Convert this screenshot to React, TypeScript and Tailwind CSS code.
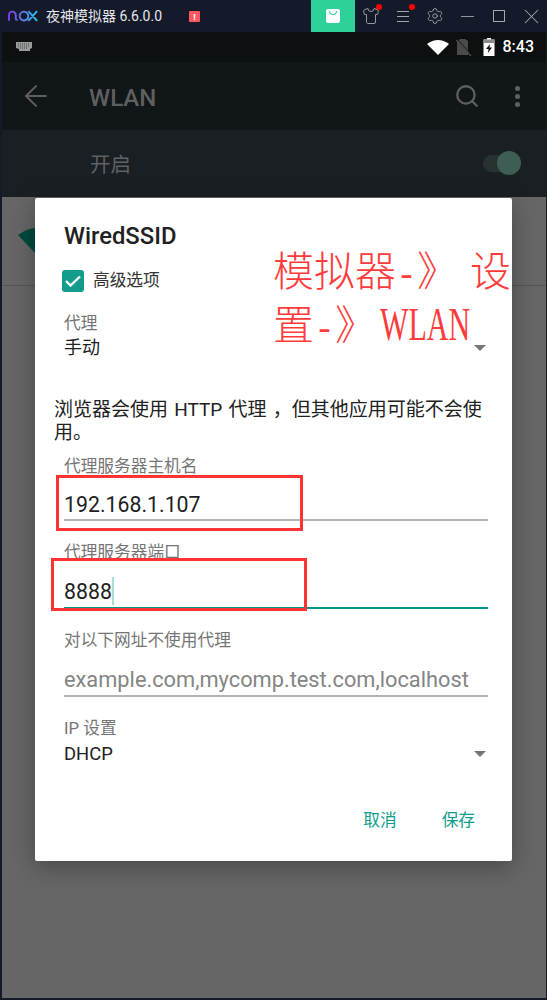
import { ArrowLeft, Search, Minus, X, Settings, Shirt } from 'lucide-react';

const sans = 'font-["Roboto","Noto_Sans_CJK_SC",sans-serif]';

function Caret() {
  return <div className="w-0 h-0 border-x-[6px] border-x-transparent border-t-[6px] border-t-[#757575]" />;
}

function TitleBar() {
  return (
    <div className="h-8 bg-[#141a29] flex items-center text-[#e4e7ee]">
      <svg width="31" height="12" viewBox="0 0 32 12" fill="none" strokeWidth="2" className="ml-2">
        <defs>
          <linearGradient id="nox" x1="0" y1="0" x2="1" y2="0">
            <stop offset="0" stopColor="#7c3fe0" />
            <stop offset="0.55" stopColor="#5b7fe6" />
            <stop offset="1" stopColor="#22c4f2" />
          </linearGradient>
        </defs>
        <path d="M1 11V5a3.5 3.5 0 0 1 7 0v4a2 2 0 0 0 2 1M12 6a4.5 4.5 0 1 1 0 .1M21 1l9 10M30 1l-9 10" stroke="url(#nox)" />
      </svg>
      <span className={`ml-[7px] mt-px text-[14px] ${sans}`}>夜神模拟器 6.6.0.0</span>
      <span className="ml-[27px] w-[11px] h-[11px] bg-[#ff5660] rounded-[1px] flex items-center justify-center text-[9px] font-bold text-white leading-none">!</span>
      <div className="ml-auto flex items-center h-full text-[#a2a6af]">
        <div className="w-11 h-full bg-[#2ed197] flex items-center justify-center">
          <div className="w-[14px] h-[14px] bg-white rounded-[2px] flex justify-center">
            <div className="w-2 h-1 border-b border-x border-[#2ed197] rounded-b-full mt-[2px]" />
          </div>
        </div>
        <div className="relative w-8 h-full flex items-center justify-center">
          <Shirt size={18} strokeWidth={1.2} />
          <span className="absolute top-1 left-[21px] w-[6px] h-[6px] rounded-full bg-[#ff0000]" />
        </div>
        <div className="relative w-8 h-full flex items-center justify-center">
          <div className="w-3 flex flex-col gap-[4px]">
            <div className="h-px bg-[#a2a6af]" />
            <div className="h-px bg-[#a2a6af]" />
            <div className="h-px bg-[#a2a6af]" />
          </div>
          <span className="absolute top-1 left-[22px] w-[6px] h-[6px] rounded-full bg-[#ff0000]" />
        </div>
        <div className="w-8 flex justify-center">
          <Settings size={18} strokeWidth={1.2} />
        </div>
        <div className="w-8 flex justify-center">
          <Minus size={21} strokeWidth={1} />
        </div>
        <div className="w-8 flex justify-center">
          <div className="w-3 h-3 border border-[#a2a6af]" />
        </div>
        <div className="w-8 flex justify-center">
          <X size={25} strokeWidth={1} />
        </div>
      </div>
    </div>
  );
}

function StatusBar() {
  return (
    <div className="h-[30px] bg-[#0d1011] flex items-center pl-[13px] pr-[12px]">
      <svg width="18" height="10" viewBox="0 0 18 10" className="text-[#9a9a9a]">
        <path d="M1 0h16v6l-2 1v2H4V7L1 6z" fill="currentColor" />
        <path d="M3 2h12M3 4h12M5 6h8" stroke="#0d1011" strokeWidth="0.6" strokeDasharray="1 1" />
      </svg>
      <div className="ml-auto flex items-center">
        <svg width="22" height="16" viewBox="0 0 22 16">
          <path d="M0 5Q11-3 22 5L11 16z" fill="#fff" />
        </svg>
        <svg width="16" height="17" viewBox="0 0 16 17" className="ml-[7px]">
          <path d="M1 2.5V16h11V2L9 0H4z" fill="#4a4a4a" />
          <path d="M0 1l15 16" stroke="#4a4a4a" strokeWidth="1.4" />
          <path d="M1 0l15 16" stroke="#0d1011" strokeWidth="0.8" />
        </svg>
        <svg width="12" height="18" viewBox="0 0 12 18" className="ml-[11px]">
          <path d="M4 0h4v1.5h3.5V18H.5V1.5H4z" fill="#fff" />
          <path d="M.5 1.5h11V5H.5z" fill="#8a8a8a" />
          <path d="M7 6 3 11h2.5L5 15l4-5.5H6.5z" fill="#0d1011" />
        </svg>
        <span className="ml-[8px] text-[16px] font-medium text-white font-['Roboto',sans-serif]">8:43</span>
      </div>
    </div>
  );
}

function Toolbar() {
  return (
    <div className="h-[68px] bg-[#111618] flex items-center text-[#5f5f5f]">
      <ArrowLeft size={34} strokeWidth={1.4} className="ml-[17px]" />
      <span className="ml-[36px] mt-[4px] text-[24px] font-medium font-['Roboto',sans-serif]">WLAN</span>
      <div className="ml-auto mr-[26px] flex items-center">
        <Search size={26} strokeWidth={2.1} />
        <div className="ml-[35px] flex flex-col gap-[3px]">
          <div className="w-[5px] h-[5px] rounded-full bg-[#5f5f5f]" />
          <div className="w-[5px] h-[5px] rounded-full bg-[#5f5f5f]" />
          <div className="w-[5px] h-[5px] rounded-full bg-[#5f5f5f]" />
        </div>
      </div>
    </div>
  );
}

function SwitchRow() {
  return (
    <div className="h-[67px] bg-[#1a1f23] flex items-center">
      <span className={`ml-[88px] mt-[4px] text-[20.5px] text-[#5f6163] ${sans}`}>开启</span>
      <div className="relative ml-auto mr-[25px] w-[38px] h-[17px] rounded-full bg-[#26332f]">
        <div className="absolute -top-[4px] right-0 w-6 h-6 rounded-full bg-[#3d5d55]" />
      </div>
    </div>
  );
}

function Field({ label, value, muted, focused }: { label: string; value: string; muted?: boolean; focused?: boolean }) {
  return (
    <div className="ml-[29px] mr-[24px]">
      <div className="text-[16.7px] leading-5 text-[#757575]">{label}</div>
      <div className={`leading-[30px] ${muted || focused ? 'mt-[14px]' : 'mt-[13px]'} ${muted ? 'text-[21.8px] text-[#858585]' : 'text-[21.3px] text-[#212121]'}`}>
        {value}
        {focused && <span className="inline-block align-[-6px] w-[2px] h-[28px] bg-[#a9ddd7]" />}
      </div>
      <div className={`h-[2px] ${focused ? 'bg-[#009688]' : 'bg-[#b3b3b3]'} ${muted || focused ? '' : '-mt-px'}`} />
    </div>
  );
}

function Dialog() {
  return (
    <div className={`absolute left-[35px] top-[198px] w-[477px] h-[663px] bg-white rounded-[2px] shadow-[0_6px_24px_rgba(0,0,0,0.3)] ${sans}`}>
      <div className="ml-[29px] pt-[24px] text-[23.8px] leading-[28px] font-medium text-[#212121]">WiredSSID</div>
      <div className="ml-[27px] mt-[20px] flex items-center leading-[22px]">
        <div className="w-[22px] h-[22px] rounded-[3px] bg-[#139c8c] flex items-center justify-center">
          <svg width="16" height="12" viewBox="0 0 16 12" fill="none" stroke="#fff" strokeWidth="2.4">
            <path d="M1 6l4.5 4.5L15 1.5" />
          </svg>
        </div>
        <span className="ml-[9px] text-[16.7px] text-[#333]">高级选项</span>
      </div>
      <div className="ml-[29px] mt-[22px] text-[16.7px] leading-5 text-[#757575]">代理</div>
      <div className="ml-[29px] mr-[26px] mt-[4px] flex items-center justify-between text-[18px] leading-5 text-[#212121]">
        <span>手动</span>
        <Caret />
      </div>
      <p className="ml-[19px] mr-[4px] mt-[40px] text-[19px] leading-[23px] text-[#212121] [word-spacing:1.5px]">
        浏览器会使用 HTTP 代理 ，但其他应用可能不会使
        <br />
        用。
      </p>
      <div className="mt-[13px]">
        <Field label="代理服务器主机名" value="192.168.1.107" />
      </div>
      <div className="mt-[22px]">
        <Field label="代理服务器端口" value="8888" focused />
      </div>
      <div className="mt-[22px]">
        <Field label="对以下网址不使用代理" value="example.com,mycomp.test.com,localhost" muted />
      </div>
      <div className="ml-[29px] mt-[22px] text-[16.7px] leading-5 text-[#757575]">IP 设置</div>
      <div className="ml-[29px] mr-[26px] mt-[5px] flex items-center justify-between text-[18.4px] leading-5 text-[#212121]">
        <span>DHCP</span>
        <Caret />
      </div>
      <div className="mt-[45px] mr-[37px] flex justify-end gap-[45px] text-[16.7px] leading-6 text-[#0e9c8c]">
        <span>取消</span>
        <span>保存</span>
      </div>
    </div>
  );
}

function Annotations() {
  return (
    <div className="absolute left-0 top-0 w-full">
      <div className="absolute left-[273px] top-[241px] whitespace-nowrap text-[41px] leading-[54px] font-extralight text-[#ff3b3b] font-['Noto_Sans_CJK_SC',serif]">
        <div className="h-[54px]">
          模拟器<span className="font-['Liberation_Mono',monospace] text-[35px]">-</span>》<span className="ml-[12px]">设</span>
        </div>
        <div className="h-[54px]">
          置<span className="font-['Liberation_Mono',monospace] text-[35px]">-</span>》<span className="ml-[4px] inline-block origin-left scale-x-[0.64] font-['Liberation_Serif',serif] text-[47px] leading-[54px]">WLAN</span>
        </div>
      </div>
      <div className="absolute left-[56px] top-[475px] w-[247px] h-[56px] border-[3px] border-[#ff3333]" />
      <div className="absolute left-[51px] top-[558px] w-[256px] h-[53px] border-[3px] border-[#ff3333]" />
    </div>
  );
}

export default function App() {
  return (
    <div className="relative w-[547px] h-[1000px] overflow-hidden bg-[#141a29]">
      <TitleBar />
      <div className="ml-[2px] mr-px h-[966px] flex flex-col">
        <StatusBar />
        <Toolbar />
        <SwitchRow />
        <div className="relative flex-1 bg-[#666666]">
          <div className="absolute left-0 right-0 top-[88px] h-px bg-[#555555]" />
          <svg width="18" height="26" viewBox="0 0 18 26" className="absolute left-[16px] top-[31px]">
            <path d="M0 7Q8 1 17 0V25z" fill="#00493f" />
          </svg>
        </div>
      </div>
      <Dialog />
      <Annotations />
    </div>
  );
}
